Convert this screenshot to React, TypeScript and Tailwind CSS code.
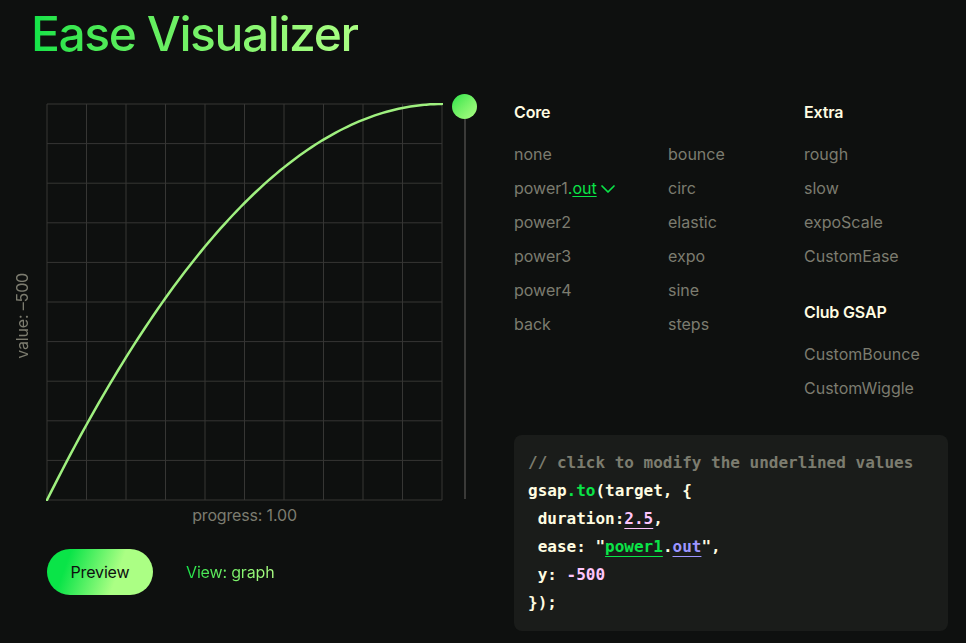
import React from "react";
import { ChevronDown } from "lucide-react";

const W = 395;
const H = 396;

function curvePath() {
  const pts: string[] = [];
  for (let i = 0; i <= 100; i++) {
    const t = i / 100;
    const v = 1 - (1 - t) * (1 - t);
    const x = 1 + t * W;
    const y = 1 + H - v * H;
    pts.push(`${i === 0 ? "M" : "L"}${x.toFixed(2)},${y.toFixed(2)}`);
  }
  return pts.join(" ");
}

function Graph() {
  const lines = [];
  for (let i = 0; i <= 10; i++) {
    const x = 1 + (i * W) / 10;
    const y = 1 + (i * H) / 10;
    lines.push(<line key={"v" + i} x1={x} y1={1} x2={x} y2={1 + H} stroke="#363634" strokeWidth={1} />);
    lines.push(<line key={"h" + i} x1={1} y1={y} x2={1 + W} y2={y} stroke="#363634" strokeWidth={1} />);
  }
  return (
    <svg width={W + 2} height={H + 2} className="block">
      {lines}
      <path d={curvePath()} fill="none" stroke="#9ff07f" strokeWidth={2.5} strokeLinecap="round" />
    </svg>
  );
}

const core1 = ["none", "power1", "power2", "power3", "power4", "back"];
const core2 = ["bounce", "circ", "elastic", "expo", "sine", "steps"];
const extra = ["rough", "slow", "expoScale", "CustomEase"];
const club = ["CustomBounce", "CustomWiggle"];

function Item({ children }: { children: React.ReactNode }) {
  return <div className="h-[34px] leading-[34px] text-[16px] text-[#7c7c6f] whitespace-nowrap">{children}</div>;
}

const line = "h-[28px] leading-[28px]";

export default function App() {
  return (
    <div
      className="w-full h-[643px] overflow-hidden bg-[#0e100f] text-[#fffce1]"
      style={{ fontFamily: "Inter, 'Noto Sans', sans-serif" }}
    >
      <h1 className="ml-[31px] pt-[6px] h-[60px] text-[48px] leading-[56px] tracking-[-0.03em] font-medium">
        <span className="bg-gradient-to-r from-[#0ae448] to-[#abff84] bg-clip-text text-transparent">Ease Visualizer</span>
      </h1>

      <div className="flex mt-[34px]">
        {/* left: graph */}
        <div className="flex flex-col w-[514px] shrink-0">
          <div className="flex">
            <div className="w-[46px] shrink-0 flex items-center justify-center pt-[10px] pr-[2px]">
              <span className="[writing-mode:vertical-rl] rotate-180 text-[16px] text-[#7c7c6f] whitespace-nowrap tracking-[-0.01em]">
                value: –500
              </span>
            </div>
            <div className="flex flex-col pt-[9px]">
              <Graph />
              <div className="text-center text-[16px] leading-[24px] text-[#7c7c6f] mt-[2px] tracking-[-0.01em]">progress: 1.00</div>
            </div>
            <div className="flex flex-col items-center ml-[9px] w-[25px]">
              <div className="w-[25px] h-[25px] rounded-full bg-gradient-to-br from-[#0ae448] to-[#abff84]" />
              <div className="w-[2px] h-[380px] bg-[#3a3a38]" />
            </div>
          </div>

          <div className="flex items-center ml-[47px] mt-[22px] gap-[33px]">
            <button className="h-[46px] w-[106px] rounded-full bg-[linear-gradient(110deg,#0ae448_20%,#abff84_65%)] text-[#0e100f] text-[16px] tracking-[-0.01em]">
              Preview
            </button>
            <span className="text-[16px] tracking-[-0.01em] bg-gradient-to-r from-[#0ae448] to-[#abff84] bg-clip-text text-transparent">
              View: graph
            </span>
          </div>
        </div>

        {/* right */}
        <div className="flex flex-col w-[434px] pt-[6px]">
          <div className="flex">
            <div className="flex flex-col w-[290px]">
              <div className="h-[24px] leading-[24px] text-[16px] font-semibold text-[#fffce1] mb-[13px] tracking-[-0.01em]">Core</div>
              <div className="flex">
                <div className="w-[154px] flex flex-col">
                  {core1.map((c) =>
                    c === "power1" ? (
                      <Item key={c}>
                        <span className="inline-flex items-center">
                          power1<span className="text-[#0ae448]">.</span>
                          <span className="text-[#0ae448] underline underline-offset-2">out</span>
                          <ChevronDown size={24} strokeWidth={1.7} className="text-[#0ae448] ml-[-1px] mt-[1px]" />
                        </span>
                      </Item>
                    ) : (
                      <Item key={c}>{c}</Item>
                    )
                  )}
                </div>
                <div className="flex flex-col">
                  {core2.map((c) => (
                    <Item key={c}>{c}</Item>
                  ))}
                </div>
              </div>
            </div>
            <div className="flex flex-col">
              <div className="h-[24px] leading-[24px] text-[16px] font-semibold text-[#fffce1] mb-[13px] tracking-[-0.01em]">Extra</div>
              {extra.map((c) => (
                <Item key={c}>{c}</Item>
              ))}
              <div className="h-[24px] leading-[24px] text-[16px] font-semibold text-[#fffce1] mt-[27px] mb-[13px] tracking-[-0.01em]">Club GSAP</div>
              {club.map((c) => (
                <Item key={c}>{c}</Item>
              ))}
            </div>
          </div>

          <div
            className="mt-[30px] w-[434px] h-[196px] rounded-[8px] bg-[#1a1c1a] px-[14px] py-[14px] text-[16px] font-bold whitespace-pre"
            style={{ fontFamily: "'DejaVu Sans Mono', 'Liberation Mono', monospace" }}
          >
            <div className={`${line} text-[#7c7c6f]`}>// click to modify the underlined values</div>
            <div className={line}>
              gsap<span className="text-[#0ae448]">.to</span>(target, {"{"}
            </div>
            <div className={line}>
              {" "}duration:<span className="text-[#fec5fb] underline underline-offset-4">2.5</span>,
            </div>
            <div className={line}>
              {" "}ease: "<span className="text-[#0ae448] underline underline-offset-4">power1</span>.
              <span className="text-[#9d95ff] underline underline-offset-4">out</span>",
            </div>
            <div className={line}>
              {" "}y: <span className="text-[#fec5fb]">-500</span>
            </div>
            <div className={line}>{"});"}</div>
          </div>
        </div>
      </div>
    </div>
  );
}
